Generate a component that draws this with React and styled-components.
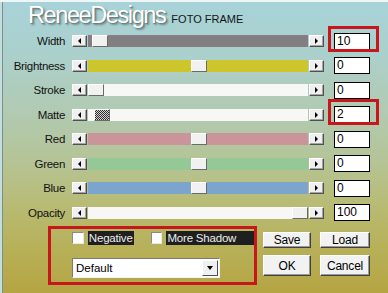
import React from 'react';
import styled, { createGlobalStyle } from 'styled-components';

const FONT = `"Liberation Sans", Arial, sans-serif`;

const GlobalStyle = createGlobalStyle`
  html, body { margin: 0; padding: 0; }
  body { width: 388px; height: 293px; overflow: hidden; font-family: ${FONT}; }
`;

const sliders = [
  { label: 'Width', value: '10', color: '#827e82', pos: 4, mark: true },
  { label: 'Brightness', value: '0', color: '#cdc52c', pos: 103 },
  { label: 'Stroke', value: '0', color: '#f7f7f5', pos: 0 },
  { label: 'Matte', value: '2', color: '#f7f7f5', pos: 6, mark: true, dither: true },
  { label: 'Red', value: '0', color: '#c9959a', pos: 103 },
  { label: 'Green', value: '0', color: '#94c896', pos: 103 },
  { label: 'Blue', value: '0', color: '#7ca5cd', pos: 103 },
  { label: 'Opacity', value: '100', color: '#f7f7f5', pos: 204 },
];

const App = () => {
  return (
    <>
      <GlobalStyle />
      <Frame>
        <Header>
          <Title>ReneeDesigns</Title>
          <Subtitle>FOTO FRAME</Subtitle>
        </Header>
        {sliders.map(s => (
          <Row key={s.label}>
            <Label>{s.label}</Label>
            <Slider>
              <ArrowBtn $dir="left" />
              <Track $color={s.color}>
                <Thumb $dither={s.dither} style={{ left: `${s.pos}px` }} />
              </Track>
              <ArrowBtn $dir="right" />
            </Slider>
            <ValueBox>
              {s.value}
              {s.mark && <Mark />}
            </ValueBox>
          </Row>
        ))}
        <Bottom>
          <Group>
            <Checks>
              <Check />
              <CheckLabel>Negative</CheckLabel>
              <Check $gap />
              <CheckLabel $width={89}>More Shadow</CheckLabel>
            </Checks>
            <Select>
              <span>Default</span>
              <SelectArrow />
            </Select>
          </Group>
          <Buttons>
            <Button>Save</Button>
            <Button>Load</Button>
            <Button $tall>OK</Button>
            <Button $tall>Cancel</Button>
          </Buttons>
        </Bottom>
      </Frame>
    </>
  );
};

const Frame = styled.div`
  width: 388px;
  height: 293px;
  box-sizing: border-box;
  background: linear-gradient(180deg, #a7d3d9 0%, #abd0cc 18%, #b1cab2 38%, #b5c496 55%, #b8bb74 70%, #b7b058 85%, #b5a542 100%);
  box-shadow: inset 0 2px #eef6f6, inset 2px 0 #c4dede, inset 3px 0 #7d8e8e;
`;

const Header = styled.div`
  height: 29px;
  box-sizing: border-box;
  padding: 2px 0 0 28px;
  display: flex;
  align-items: baseline;
`;

const Title = styled.span`
  font-size: 23.5px;
  line-height: 27px;
  letter-spacing: -1.4px;
  color: #ffffff;
  text-shadow: 1px 1px 1px #6c7a7a, 2px 2px 2px rgba(60, 70, 70, 0.5);
`;

const Subtitle = styled.span`
  margin-left: 6px;
  font-size: 11px;
  color: #151515;
`;

const Row = styled.div`
  height: 24.5px;
  display: flex;
  align-items: center;
`;

const Label = styled.div`
  width: 65px;
  text-align: right;
  font-size: 11.5px;
  letter-spacing: -0.3px;
  color: #111;
`;

const Slider = styled.div`
  margin-left: 7px;
  width: 252px;
  height: 12px;
  display: flex;
`;

const ArrowBtn = styled.div`
  width: 15px;
  height: 12px;
  box-sizing: border-box;
  background: #f0f0f0;
  border: 1px solid;
  border-color: #ffffff #505050 #505050 #ffffff;
  box-shadow: inset -1px -1px #a4a4a4;
  display: flex;
  align-items: center;
  justify-content: center;
  &::before {
    content: '';
    border-top: 3px solid transparent;
    border-bottom: 3px solid transparent;
    ${p => (p.$dir === 'left' ? 'border-right: 3px solid #000;' : 'border-left: 3px solid #000;')}
  }
`;

const Track = styled.div`
  position: relative;
  flex: 1;
  margin: 0 1px;
  height: 12px;
  background: ${p => p.$color};
`;

const Thumb = styled.div`
  position: absolute;
  top: 0;
  width: 16px;
  height: 12px;
  box-sizing: border-box;
  border: 1px solid;
  border-color: #ffffff #6a6a6a #6a6a6a #ffffff;
  background: ${p => (p.$dither
    ? 'repeating-conic-gradient(#2e2e2e 0 25%, #d4d4d4 0 50%) 0 0 / 2px 2px'
    : '#f1f1f1')};
`;

const ValueBox = styled.div`
  position: relative;
  margin-left: 10px;
  width: 36px;
  height: 17px;
  box-sizing: border-box;
  padding-left: 2px;
  background: #fff;
  border: 1px solid #000;
  font-size: 12px;
  line-height: 15px;
  color: #000;
`;

const Mark = styled.div`
  position: absolute;
  left: -7px;
  right: -10px;
  top: -8px;
  bottom: -3px;
  border: 3px solid #c8161d;
`;

const Bottom = styled.div`
  margin-top: 1px;
  padding-left: 48px;
  display: flex;
  align-items: flex-start;
`;

const Group = styled.div`
  width: 209px;
  height: 59px;
  box-sizing: border-box;
  border: 3px solid #c8161d;
  padding: 2px 0 0 21px;
`;

const Checks = styled.div`
  height: 14px;
  display: flex;
  align-items: center;
`;

const Check = styled.span`
  width: 12px;
  height: 12px;
  box-sizing: border-box;
  margin-left: ${p => (p.$gap ? '17px' : '0')};
  background: #fff;
  border: 1px solid;
  border-color: #8a8a8a #e8e8e8 #e8e8e8 #8a8a8a;
`;

const CheckLabel = styled.span`
  margin-left: 4px;
  width: ${p => (p.$width ? `${p.$width}px` : 'auto')};
  height: 14px;
  line-height: 14px;
  padding: 0 1px;
  box-sizing: border-box;
  background: #1f1f1f;
  color: #ececec;
  font-size: 11.5px;
  letter-spacing: -0.2px;
`;

const Select = styled.div`
  margin-top: 13px;
  width: 148px;
  height: 20px;
  box-sizing: border-box;
  display: flex;
  align-items: center;
  justify-content: space-between;
  padding: 0 1px 0 3px;
  background: #fff;
  border: 1px solid;
  border-color: #7a7a7a #f4f4f4 #f4f4f4 #7a7a7a;
  font-size: 11.5px;
  color: #000;
`;

const SelectArrow = styled.span`
  width: 16px;
  height: 16px;
  box-sizing: border-box;
  background: #f0f0f0;
  border: 1px solid;
  border-color: #ffffff #505050 #505050 #ffffff;
  display: flex;
  align-items: center;
  justify-content: center;
  &::before {
    content: '';
    border-left: 3.5px solid transparent;
    border-right: 3.5px solid transparent;
    border-top: 4px solid #000;
  }
`;

const Buttons = styled.div`
  margin-left: 6px;
  padding-top: 6px;
  display: grid;
  grid-template-columns: 48px 50px;
  grid-template-rows: 16px 21px;
  column-gap: 9px;
  row-gap: 7px;
`;

const Button = styled.button`
  margin: 0;
  padding: 0;
  font-family: ${FONT};
  font-size: 12px;
  letter-spacing: -0.2px;
  color: #000;
  background: #f2f2f2;
  border: 1px solid;
  border-color: #ffffff #404040 #404040 #ffffff;
  box-shadow: inset -1px -1px #9a9a9a;
`;

export default App;
